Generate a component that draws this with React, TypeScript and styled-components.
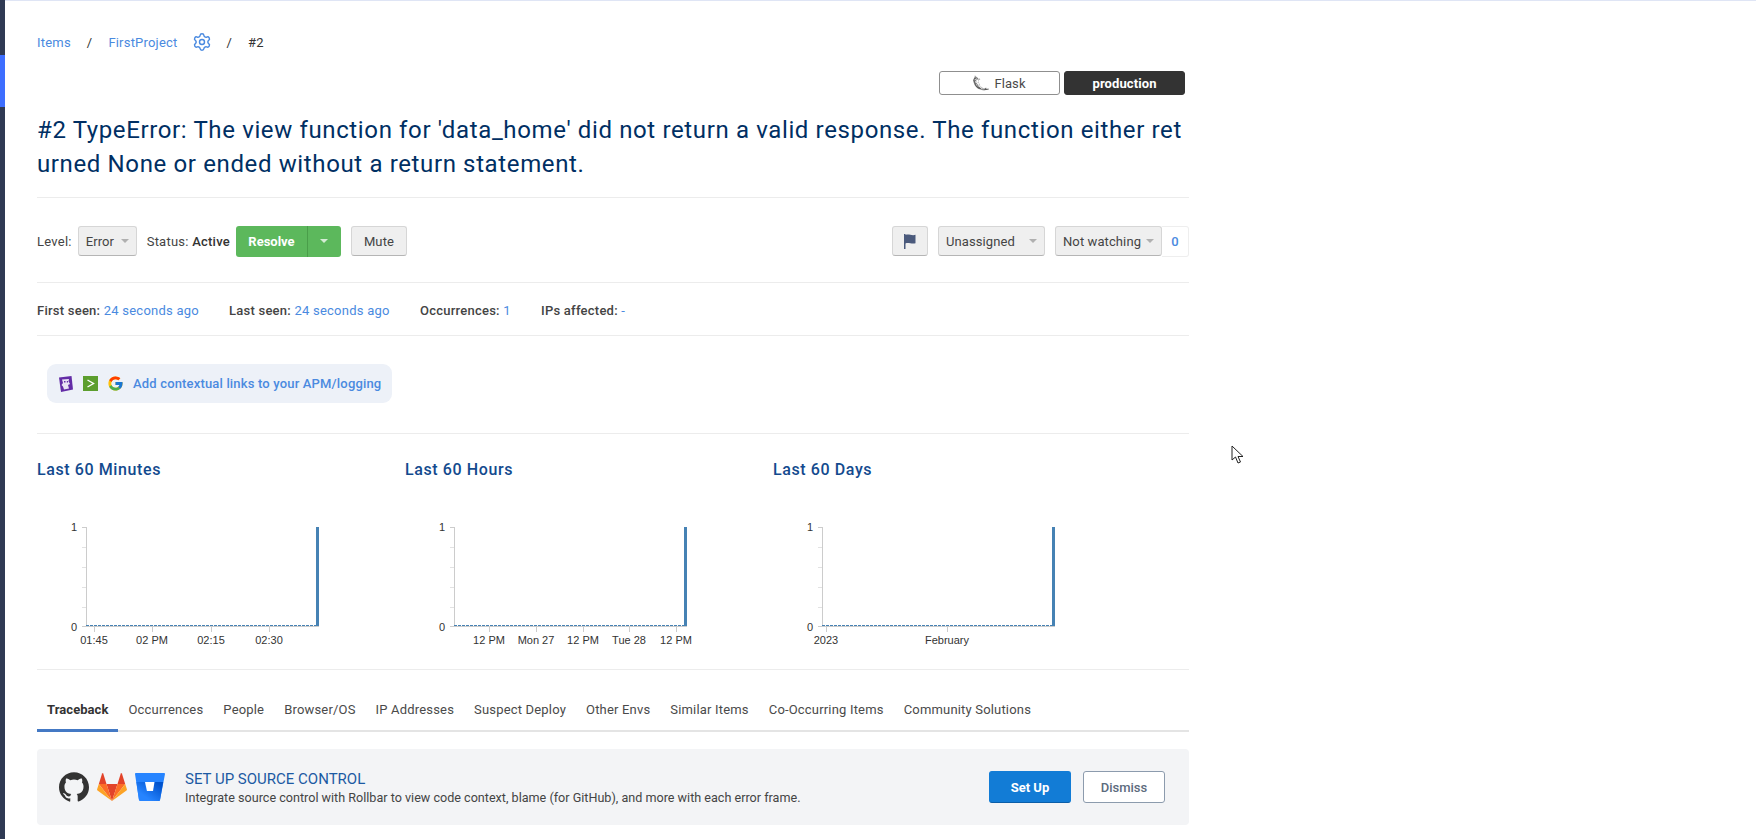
import React from 'react';
import styled, {createGlobalStyle} from 'styled-components';
import {Settings} from 'lucide-react';
import {FcGoogle} from 'react-icons/fc';
import {SiFlask, SiGithub} from 'react-icons/si';

const GlobalStyle = createGlobalStyle`
  html, body {
    margin: 0;
    padding: 0;
    height: 100%;
    overflow: hidden;
    background: #fff;
    font-family: Roboto, "Liberation Sans", sans-serif;
    color: #3f3f3f;
  }
`;

const Page = styled.div`
  display: flex;
  height: 839px;
`;

const Rail = styled.nav`
  flex: 0 0 5px;
  background: #2f3a54;
  padding-top: 55px;
  box-sizing: border-box;
`;

const RailMarker = styled.div`
  height: 52px;
  background: #3d6eff;
`;

const Main = styled.main`
  flex: 1;
  border-top: 1px solid #dfe5f5;
  padding: 0 0 0 32px;
`;

const Content = styled.div`
  width: 1152px;
`;

const Breadcrumbs = styled.div`
  display: flex;
  align-items: center;
  height: 20px;
  margin-top: 31px;
  font-size: 13px;
  letter-spacing: 0.2px;
`;

const Crumb = styled.a`
  color: #4a8ae0;
`;

const CrumbSep = styled.span<{ $left: number }>`
  margin: 0 16px 0 ${(props) => props.$left}px;
  color: #333;
`;

const GearLink = styled.span`
  display: flex;
  color: #4a8ae0;
  margin-left: 15px;
`;

const CrumbCurrent = styled.span`
  color: #333;
`;

const ChipRow = styled.div`
  display: flex;
  justify-content: flex-end;
  gap: 4px;
  padding-right: 4px;
  margin-top: 19px;
`;

const Chip = styled.div<{ $dark?: boolean }>`
  box-sizing: border-box;
  display: flex;
  align-items: center;
  justify-content: center;
  gap: 5px;
  width: 121px;
  height: 24px;
  border-radius: 3px;
  font-size: 13px;
  letter-spacing: 0.1px;
  border: 1px solid ${(props) => props.$dark ? '#333' : '#8f8f8f'};
  background: ${(props) => props.$dark ? '#333' : '#fff'};
  color: ${(props) => props.$dark ? '#fff' : '#4a4a4a'};
  font-weight: ${(props) => props.$dark ? 700 : 400};
`;

const Title = styled.h1`
  margin: 18px 0 0;
  font-size: 24px;
  line-height: 34px;
  font-weight: 450;
  letter-spacing: 0.63px;
  color: #002f63;
  word-break: break-all;
`;

const Divider = styled.hr<{ $top?: number }>`
  height: 1px;
  margin: ${(props) => props.$top ?? 0}px 0 0;
  border: 0;
  background: #ececec;
`;

const Toolbar = styled.div`
  display: flex;
  align-items: center;
  justify-content: space-between;
  box-sizing: border-box;
  height: 84px;
  padding-top: 2px;
  font-size: 13px;
  letter-spacing: 0.24px;
`;

const ToolbarGroup = styled.div`
  display: flex;
  align-items: center;
`;

const Label = styled.span<{ $left?: number }>`
  margin-left: ${(props) => props.$left ?? 0}px;
  color: #444;
`;

const Strong = styled.strong`
  font-weight: 500;
  color: #333;
`;

const GrayButton = styled.button<{ $width: number; $left?: number; $between?: boolean }>`
  box-sizing: border-box;
  display: flex;
  align-items: center;
  justify-content: ${(props) => props.$between ? 'space-between' : 'center'};
  width: ${(props) => props.$width}px;
  height: 30px;
  margin-left: ${(props) => props.$left ?? 0}px;
  padding: 0 7px;
  background: #efefef;
  border: 1px solid #d6d6d6;
  border-bottom-color: #b5b5b5;
  border-radius: 3px;
  font: 13px Roboto, sans-serif;
  letter-spacing: 0.1px;
  color: #444;
`;

const Caret = styled.i<{ $color?: string }>`
  display: block;
  width: 0;
  height: 0;
  border-left: 4px solid transparent;
  border-right: 4px solid transparent;
  border-top: 4px solid ${(props) => props.$color ?? '#b0b0b0'};
`;

const ResolveGroup = styled.div`
  display: flex;
  height: 31px;
  margin-left: 6px;
  border-radius: 3px;
  overflow: hidden;
  background: #5cb85c;
  color: #fff;
  font-weight: 700;
  font-size: 13px;
  letter-spacing: 0;
`;

const ResolveLabel = styled.div`
  display: flex;
  align-items: center;
  justify-content: center;
  width: 71px;
`;

const ResolveCaret = styled.div`
  display: flex;
  align-items: center;
  justify-content: center;
  width: 33px;
  border-left: 1px solid #4a9e4a;
`;

const WatchCount = styled.div`
  box-sizing: border-box;
  display: flex;
  align-items: center;
  justify-content: center;
  width: 27px;
  height: 31px;
  border: 1px solid #eee;
  border-left: 0;
  border-radius: 0 3px 3px 0;
  color: #4a8ae0;
  font-weight: 500;
`;

const Stats = styled.div`
  display: flex;
  align-items: center;
  box-sizing: border-box;
  height: 52px;
  padding-top: 2px;
  font-size: 13px;
  font-weight: 500;
  letter-spacing: 0.24px;
  color: #444;
`;

const Stat = styled.span<{ $width: number }>`
  flex: 0 0 ${(props) => props.$width}px;
`;

const StatValue = styled.span`
  color: #4a8ae0;
  font-weight: 400;
`;

const LinksRow = styled.div`
  height: 97px;
  padding: 28px 0 0 10px;
  box-sizing: border-box;
`;

const LinksPill = styled.a`
  box-sizing: border-box;
  display: flex;
  align-items: center;
  width: 345px;
  height: 39px;
  padding-left: 11px;
  border-radius: 9px;
  background: #edf1f8;
  color: #4a8ae0;
  font-size: 13px;
  font-weight: 500;
  letter-spacing: 0.17px;
`;

const LogoSlot = styled.span<{ $gap: number }>`
  display: flex;
  margin-right: ${(props) => props.$gap}px;
`;

const Charts = styled.div`
  display: grid;
  grid-template-columns: repeat(3, 368px);
  height: 235px;
`;

const ChartTitle = styled.h3`
  margin: 26px 0 0;
  font-size: 16px;
  line-height: 20px;
  font-weight: 500;
  letter-spacing: 0.6px;
  color: #134a8e;
`;

const ChartSvg = styled.svg`
  display: block;
  margin-top: 36px;
`;

const Tabs = styled.div`
  display: flex;
  margin-top: 38px;
  height: 22px;
  border-bottom: 2px solid #e4e4e4;
  font-size: 13px;
`;

const Tab = styled.a<{ $active?: boolean }>`
  box-sizing: border-box;
  height: 38px;
  margin-top: -14px;
  padding: 8px 10px 0;
  white-space: nowrap;
  letter-spacing: ${(props) => props.$active ? 0.06 : 0.18}px;
  color: ${(props) => props.$active ? '#333' : '#4a4a4a'};
  font-weight: ${(props) => props.$active ? 700 : 400};
  border-bottom: ${(props) => props.$active ? '3px solid #4479c4' : '0'};
`;

const Banner = styled.section`
  display: flex;
  align-items: center;
  box-sizing: border-box;
  height: 76px;
  margin-top: 17px;
  padding: 0 24px 0 22px;
  background: #f3f4f6;
  border-radius: 4px;
`;

const BannerLogos = styled.div`
  display: flex;
  align-items: center;
  gap: 8px;
  margin-right: 20px;
`;

const BannerText = styled.div`
  flex: 1;
  padding-top: 2px;
`;

const BannerTitle = styled.div`
  font-size: 15px;
  line-height: 18px;
  color: #1c5aa3;
`;

const BannerBody = styled.div`
  font-size: 12.6px;
  line-height: 19px;
  color: #444;
`;

const BannerButton = styled.button<{ $primary?: boolean }>`
  box-sizing: border-box;
  width: 82px;
  height: 32px;
  margin-left: 12px;
  border-radius: 3px;
  font: ${(props) => props.$primary ? 700 : 500} 13px Roboto, sans-serif;
  border: 1px solid ${(props) => props.$primary ? '#127cd6' : '#8c9bad'};
  border-bottom-color: ${(props) => props.$primary ? '#0b5ea8' : '#8c9bad'};
  background: ${(props) => props.$primary ? '#127cd6' : '#fff'};
  color: ${(props) => props.$primary ? '#fff' : '#5c6b7d'};
`;

const Cursor = styled.svg`
  position: absolute;
  left: 1231px;
  top: 445px;
`;

interface ITick {
  x: number;
  label: string;
}

const CHARTS: { title: string; axisLeft: number; ticks: ITick[] }[] = [
  {title: 'Last 60 Minutes', axisLeft: 49, ticks: [{x: 57, label: '01:45'}, {x: 115, label: '02 PM'}, {x: 174, label: '02:15'}, {x: 232, label: '02:30'}]},
  {title: 'Last 60 Hours', axisLeft: 49, ticks: [{x: 84, label: '12 PM'}, {x: 131, label: 'Mon 27'}, {x: 178, label: '12 PM'}, {x: 224, label: 'Tue 28'}, {x: 271, label: '12 PM'}]},
  {title: 'Last 60 Days', axisLeft: 49, ticks: [{x: 53, label: '2023'}, {x: 174, label: 'February'}]},
];

const TABS = ['Traceback', 'Occurrences', 'People', 'Browser/OS', 'IP Addresses', 'Suspect Deploy', 'Other Envs', 'Similar Items', 'Co-Occurring Items', 'Community Solutions'];

const MiniChart: React.FC<{ ticks: ITick[]; axisLeft: number }> = ({ticks, axisLeft}) => {
  const top = 11;
  const bottom = 110;
  const right = axisLeft + 233;
  return (
    <ChartSvg width="300" height="135" viewBox="0 0 300 135">
      <g stroke="#ccc" strokeWidth="1" shapeRendering="crispEdges">
        <path d={`M${axisLeft - 4} ${top}H${axisLeft}V${bottom}H${right}`} fill="none" />
        <path d={`M${axisLeft - 4} ${bottom}H${axisLeft}`} />
        {[31, 51, 71, 91].map((y) => <path key={y} d={`M${axisLeft - 4} ${y}H${axisLeft}`} stroke="#e2e2e2" />)}
        {ticks.map((t) => <path key={t.x} d={`M${t.x} ${bottom}V${bottom + 6}`} />)}
      </g>
      <path d={`M${axisLeft} ${bottom - 1}H${right - 3}`} stroke="#4682b4" strokeWidth="1" strokeDasharray="3 1" shapeRendering="crispEdges" />
      <rect x={right - 3} y={top} width="3" height={bottom - top} fill="#4682b4" />
      <g fontFamily="'Liberation Sans', Arial, sans-serif" fontSize="11" fill="#333">
        <text x={axisLeft - 9} y={top + 4} textAnchor="end">1</text>
        <text x={axisLeft - 9} y={bottom + 5} textAnchor="end">0</text>
        {ticks.map((t) => <text key={t.x} x={t.x} y={bottom + 18} textAnchor="middle">{t.label}</text>)}
      </g>
    </ChartSvg>
  );
};

const FlagIcon = () => (
  <svg width="12" height="15" viewBox="0 0 12 15">
    <path d="M0 0h1.5v15H0zM1.5 1c3-1.5 6.4 1.2 10-.2v8.4c-3.6 1.4-7-1.3-10 .2z" fill="#4b5a7c" />
  </svg>
);

const DatadogLogo = () => (
  <svg width="15" height="16" viewBox="0 0 15 16">
    <path d="M1 1.5 13.5 0 15 13.5 3 16Z" fill="#632ca6" />
    <path d="M4 3.5 11 3l-.5 2.2L12 8l-2 1 1 3.5-5 1-1-3-1.5-1.5L5 7Z" fill="#e9e2f4" />
    <path d="M6 5h1.5v1.5H6zM8.8 5h1.2v1.4H8.8z" fill="#632ca6" />
  </svg>
);

const ShellLogo = () => (
  <svg width="15" height="15" viewBox="0 0 15 15">
    <rect width="15" height="15" fill="#5c9e2e" />
    <path d="M4.5 4 10.5 7.5 4.5 11" fill="none" stroke="#fff" strokeWidth="1.4" />
  </svg>
);

const GitLabLogo = () => (
  <svg width="30" height="28" viewBox="0 0 30 28">
    <path d="M15 28 9.5 11h11Z" fill="#e24329" />
    <path d="M15 28 9.5 11H1.8Z" fill="#fc6d26" />
    <path d="M1.8 11 .1 16.2c-.2.5 0 1 .4 1.3L15 28Z" fill="#fca326" />
    <path d="M1.8 11h7.7L6.2.6c-.2-.5-.9-.5-1.1 0Z" fill="#e24329" />
    <path d="M15 28l5.5-17h7.7Z" fill="#fc6d26" />
    <path d="M28.2 11l1.7 5.2c.2.5 0 1-.4 1.3L15 28Z" fill="#fca326" />
    <path d="M28.2 11h-7.7L23.8.6c.2-.5.9-.5 1.1 0Z" fill="#e24329" />
  </svg>
);

const BitbucketLogo = () => (
  <svg width="30" height="28" viewBox="0 0 30 28">
    <defs>
      <linearGradient id="bitbucketShade" x1="1" y1="0.25" x2="0.4" y2="0.85">
        <stop offset="0" stopColor="#0052cc" />
        <stop offset="1" stopColor="#2684ff" />
      </linearGradient>
    </defs>
    <path d="M1 0C.4 0 0 .5 0 1.1L3.9 26.6c.1.7.7 1.3 1.4 1.3H24c.5 0 .9-.4 1-.9L30 1.1C30 .5 29.6 0 29 0Z" fill="#2684ff" />
    <path d="M28.2 9H19l-1.5 9h-6L9.8 9H1.4L3.9 26.6c.1.7.7 1.3 1.4 1.3H24c.5 0 .9-.4 1-.9Z" fill="url(#bitbucketShade)" />
    <path d="M10 9h9.5L18 18h-6Z" fill="#fff" />
  </svg>
);

export default function App() {
  return (
    <Page>
      <GlobalStyle />
      <Rail>
        <RailMarker />
      </Rail>
      <Main>
        <Content>
          <Breadcrumbs>
            <Crumb>Items</Crumb>
            <CrumbSep $left={16}>/</CrumbSep>
            <Crumb>FirstProject</Crumb>
            <GearLink><Settings size={20} strokeWidth={1.7} /></GearLink>
            <CrumbSep $left={14}>/</CrumbSep>
            <CrumbCurrent>#2</CrumbCurrent>
          </Breadcrumbs>
          <ChipRow>
            <Chip><SiFlask size={16} color="#555" /> Flask</Chip>
            <Chip $dark>production</Chip>
          </ChipRow>
          <Title>#2 TypeError: The view function for 'data_home' did not return a valid response. The function either returned None or ended without a return statement.</Title>
          <Divider $top={16} />
          <Toolbar>
            <ToolbarGroup>
              <Label>Level:</Label>
              <GrayButton $width={59} $left={6} $between>Error <Caret /></GrayButton>
              <Label $left={10}>Status: <Strong>Active</Strong></Label>
              <ResolveGroup>
                <ResolveLabel>Resolve</ResolveLabel>
                <ResolveCaret><Caret $color="#d5ecd5" /></ResolveCaret>
              </ResolveGroup>
              <GrayButton $width={56} $left={10}>Mute</GrayButton>
            </ToolbarGroup>
            <ToolbarGroup>
              <GrayButton $width={36}><FlagIcon /></GrayButton>
              <GrayButton $width={107} $left={10} $between>Unassigned <Caret /></GrayButton>
              <GrayButton $width={107} $left={10} $between>Not watching <Caret /></GrayButton>
              <WatchCount>0</WatchCount>
            </ToolbarGroup>
          </Toolbar>
          <Divider />
          <Stats>
            <Stat $width={192}>First seen: <StatValue>24 seconds ago</StatValue></Stat>
            <Stat $width={191}>Last seen: <StatValue>24 seconds ago</StatValue></Stat>
            <Stat $width={121}>Occurrences: <StatValue>1</StatValue></Stat>
            <Stat $width={100}>IPs affected: <StatValue>-</StatValue></Stat>
          </Stats>
          <Divider />
          <LinksRow>
            <LinksPill>
              <LogoSlot $gap={10}><DatadogLogo /></LogoSlot>
              <LogoSlot $gap={9}><ShellLogo /></LogoSlot>
              <LogoSlot $gap={9}><FcGoogle size={17} /></LogoSlot>
              Add contextual links to your APM/logging
            </LinksPill>
          </LinksRow>
          <Divider />
          <Charts>
            {CHARTS.map((chart) => (
              <div key={chart.title}>
                <ChartTitle>{chart.title}</ChartTitle>
                <MiniChart ticks={chart.ticks} axisLeft={chart.axisLeft} />
              </div>
            ))}
          </Charts>
          <Divider />
          <Tabs>
            {TABS.map((tab, i) => <Tab key={tab} $active={i === 0}>{tab}</Tab>)}
          </Tabs>
          <Banner>
            <BannerLogos>
              <SiGithub size={30} color="#333" />
              <GitLabLogo />
              <BitbucketLogo />
            </BannerLogos>
            <BannerText>
              <BannerTitle>SET UP SOURCE CONTROL</BannerTitle>
              <BannerBody>Integrate source control with Rollbar to view code context, blame (for GitHub), and more with each error frame.</BannerBody>
            </BannerText>
            <BannerButton $primary>Set Up</BannerButton>
            <BannerButton>Dismiss</BannerButton>
          </Banner>
        </Content>
      </Main>
      <Cursor width="13" height="19" viewBox="0 0 13 19">
        <path d="M1 1V15L4.5 12 7 18 9.5 17 7 11.5H12Z" fill="#fff" stroke="#222" strokeWidth="1" strokeLinejoin="round" />
      </Cursor>
    </Page>
  );
}
